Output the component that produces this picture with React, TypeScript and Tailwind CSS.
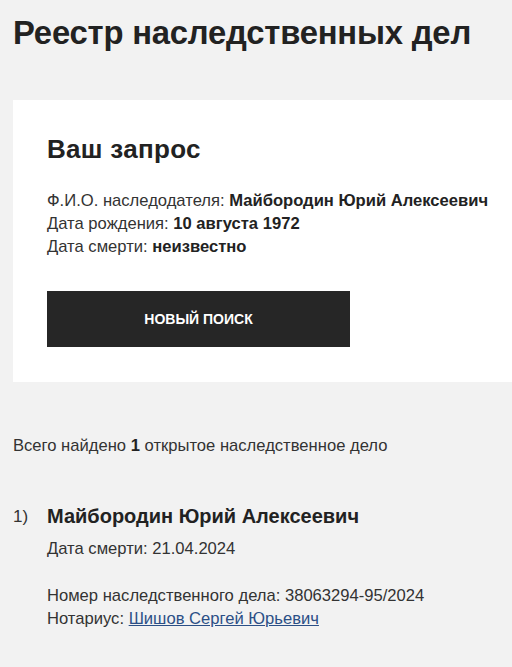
export default function App() {
  return (
    <div
      className="min-h-[667px] bg-[#f2f2f2] text-[#222] pl-[13px]"
      style={{ fontFamily: '"Liberation Sans", Arial, sans-serif' }}
    >
      <h1 className="pt-[13px] text-[32.8px] leading-[40px] font-bold tracking-[-0.2px]">
        Реестр наследственных дел
      </h1>

      {/* Request card */}
      <div className="mt-[47px] bg-white pl-[34px] pt-[33px] pb-[35px]">
        <h2 className="text-[26px] leading-[32px] font-bold tracking-[0.3px]">Ваш запрос</h2>
        <div className="mt-[24px] text-[16.6px] leading-[23px] text-[#333]">
          <p>
            Ф.И.О. наследодателя:{" "}
            <strong className="text-[#222]">Майбородин Юрий Алексеевич</strong>
          </p>
          <p>
            Дата рождения: <strong className="text-[#222]">10 августа 1972</strong>
          </p>
          <p>
            Дата смерти: <strong className="text-[#222]">неизвестно</strong>
          </p>
        </div>
        <button className="mt-[33px] flex h-[56px] w-[303px] items-center justify-center bg-[#262626] text-[14px] font-bold text-white">
          НОВЫЙ ПОИСК
        </button>
      </div>

      <p className="mt-[52px] text-[16.6px] leading-[23px] text-[#333]">
        Всего найдено <strong className="text-[#222]">1</strong> открытое
        наследственное дело
      </p>

      {/* Results */}
      <div className="mt-[46px] flex text-[16.6px] text-[#333]">
        <span className="w-[34px] pt-[1px] text-[17px] leading-[26px]">1)</span>
        <div>
          <h3 className="text-[20px] leading-[26px] font-bold text-[#222]">
            Майбородин Юрий Алексеевич
          </h3>
          <p className="mt-[8px] leading-[23px]">Дата смерти: 21.04.2024</p>
          <p className="mt-[24px] leading-[23px]">
            Номер наследственного дела: 38063294-95/2024
          </p>
          <p className="leading-[23px]">
            Нотариус:{" "}
            <a href="#" className="text-[#2b4f86] underline">
              Шишов Сергей Юрьевич
            </a>
          </p>
        </div>
      </div>
    </div>
  );
}
